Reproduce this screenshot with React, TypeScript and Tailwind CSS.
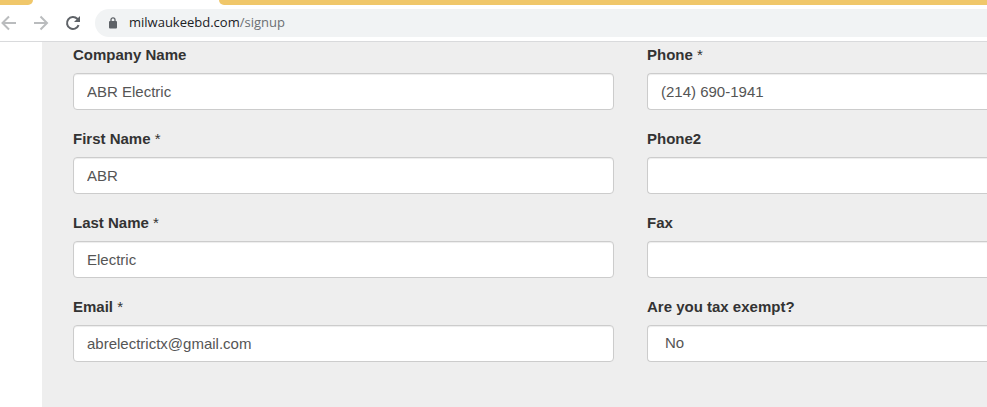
import { clsx } from "clsx"

interface Field {
  id: string
  label: string
  required?: boolean
  value?: string
  type?: string
  options?: string[]
}

const contactFields: Field[] = [
  { id: "company", label: "Company Name", value: "ABR Electric" },
  { id: "firstName", label: "First Name", required: true, value: "ABR" },
  { id: "lastName", label: "Last Name", required: true, value: "Electric" },
  { id: "email", label: "Email", required: true, value: "abrelectrictx@gmail.com", type: "email" },
]

const phoneFields: Field[] = [
  { id: "phone", label: "Phone", required: true, value: "(214) 690-1941", type: "tel" },
  { id: "phone2", label: "Phone2", type: "tel" },
  { id: "fax", label: "Fax", type: "tel" },
  { id: "taxExempt", label: "Are you tax exempt?", options: ["No", "Yes"] },
]

function TabStrip() {
  return (
    <div className="flex h-[5px] bg-white">
      <div className="w-[33px] rounded-br-[5px] bg-[#f0c76a]" />
      <div className="w-[186px]" />
      <div className="flex-1 rounded-bl-[5px] bg-[#f0c76a]" />
    </div>
  )
}

function Toolbar() {
  return (
    <div className="flex h-[37px] items-center border-b border-[#d9dadc] bg-white">
      <button type="button" aria-label="Back" className="w-[17px]">
        <svg width="17" height="16" viewBox="0 0 17 16" fill="none" stroke="#babcbe" strokeWidth="2">
          <path d="M16 8H3M9 1.5L2.5 8L9 14.5" />
        </svg>
      </button>
      <button type="button" aria-label="Forward" className="ml-4 w-4">
        <svg width="16" height="16" viewBox="0 0 16 16" fill="none" stroke="#babcbe" strokeWidth="2">
          <path d="M1 8H14M7.5 1.5L14 8L7.5 14.5" />
        </svg>
      </button>
      <button type="button" aria-label="Reload" className="ml-4 w-4">
        <svg width="16" height="16" viewBox="0 0 16 16" fill="none">
          <path d="M13.6 10.2A6 6 0 1 1 12.3 3.8L13 4.5" stroke="#5f6368" strokeWidth="2" />
          <path d="M15 1V7H9Z" fill="#5f6368" />
        </svg>
      </button>
      <div className="ml-[14px] flex h-7 flex-1 items-center rounded-l-full bg-[#f1f3f4] pl-[14px]">
        <svg width="8" height="12" viewBox="0 0 8 12" fill="none">
          <path d="M2 5V2.8a2 2 0 0 1 4 0V5" stroke="#5f6368" strokeWidth="1.3" />
          <rect y="4" width="8" height="7.5" rx="1" fill="#5f6368" />
        </svg>
        <a href="#signup" className="ml-3 font-['Open_Sans',sans-serif] text-[13px] text-[#202124]">
          milwaukeebd.com<span className="text-[#6b6f73]">/signup</span>
        </a>
      </div>
    </div>
  )
}

function FormField({ field, cutOff }: { field: Field; cutOff?: boolean }) {
  const control = clsx(
    "h-[37px] w-full appearance-none border border-[#cccccc] bg-white text-[15px] text-[#555555] shadow-[inset_0_1px_1px_rgba(0,0,0,0.075)] outline-none",
    cutOff ? "rounded-l border-r-0" : "rounded",
    field.options ? "px-[17px]" : "px-[13px]"
  )

  return (
    <div className="flex flex-col gap-2">
      <label htmlFor={field.id} className="text-[15px] leading-5 font-bold text-[#333333]">
        {field.label}
        {field.required && <span className="font-normal"> *</span>}
      </label>
      {field.options ? (
        <select id={field.id} className={control}>
          {field.options.map((option) => (
            <option key={option}>{option}</option>
          ))}
        </select>
      ) : (
        <input id={field.id} type={field.type ?? "text"} defaultValue={field.value} className={control} />
      )}
    </div>
  )
}

export default function App() {
  return (
    <div className="flex min-h-screen flex-col bg-white font-['Liberation_Sans',Arial,sans-serif]">
      <TabStrip />
      <Toolbar />
      <form className="ml-[42px] grid flex-1 grid-cols-[541fr_340fr] content-start gap-x-[33px] bg-[#eeeeee] pt-[3px] pb-11 pl-[31px]">
        <div className="flex flex-col gap-[19px]">
          {contactFields.map((field) => (
            <FormField key={field.id} field={field} />
          ))}
        </div>
        <div className="flex flex-col gap-[19px]">
          {phoneFields.map((field) => (
            <FormField key={field.id} field={field} cutOff />
          ))}
        </div>
      </form>
    </div>
  )
}
